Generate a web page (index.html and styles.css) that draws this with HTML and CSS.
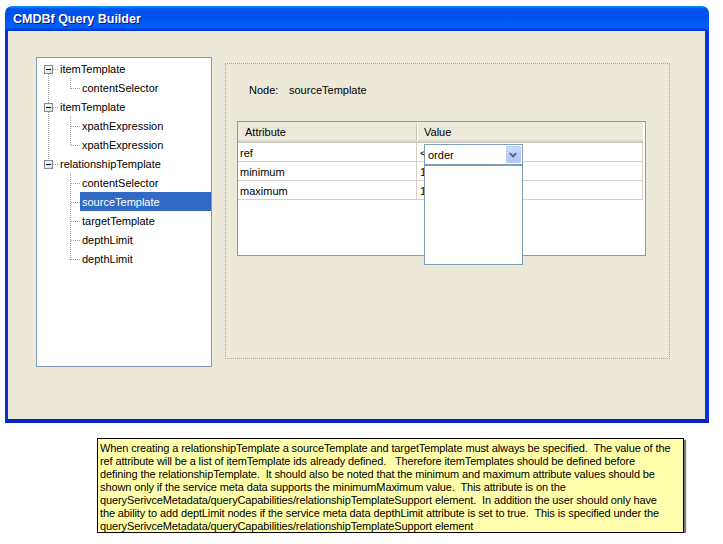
FILE: index.html
```html
<!DOCTYPE html>
<html>
<head>
<meta charset="utf-8">
<title>CMDBf Query Builder</title>
<link rel="stylesheet" href="styles.css">
</head>
<body>
<div class="window">
  <div class="titlebar"><span class="title">CMDBf Query Builder</span></div>
  <div class="frame">
    <div class="client">
      <div class="tree">
        <svg class="tree-lines" width="174" height="308" viewBox="0 0 174 308">
          <g fill="none" stroke="#a0a0a0" stroke-width="1" stroke-dasharray="1 1" shape-rendering="crispEdges">
            <line x1="11.5" y1="16" x2="11.5" y2="45"/>
            <line x1="11.5" y1="54" x2="11.5" y2="102"/>
            <line x1="16" y1="11.5" x2="22" y2="11.5"/>
            <line x1="16" y1="49.5" x2="22" y2="49.5"/>
            <line x1="16" y1="106.5" x2="22" y2="106.5"/>
            <line x1="33.5" y1="20" x2="33.5" y2="31"/>
            <line x1="33.5" y1="58" x2="33.5" y2="88"/>
            <line x1="33.5" y1="115" x2="33.5" y2="202"/>
            <line x1="34" y1="30.5" x2="43" y2="30.5"/>
            <line x1="34" y1="68.5" x2="43" y2="68.5"/>
            <line x1="34" y1="87.5" x2="43" y2="87.5"/>
            <line x1="34" y1="125.5" x2="43" y2="125.5"/>
            <line x1="34" y1="144.5" x2="43" y2="144.5"/>
            <line x1="34" y1="163.5" x2="43" y2="163.5"/>
            <line x1="34" y1="182.5" x2="43" y2="182.5"/>
            <line x1="34" y1="201.5" x2="43" y2="201.5"/>
          </g>
        </svg>
        <div class="row root"><span class="exp"></span><span class="label">itemTemplate</span></div>
        <div class="row child"><span class="label">contentSelector</span></div>
        <div class="row root"><span class="exp"></span><span class="label">itemTemplate</span></div>
        <div class="row child"><span class="label">xpathExpression</span></div>
        <div class="row child"><span class="label">xpathExpression</span></div>
        <div class="row root"><span class="exp"></span><span class="label">relationshipTemplate</span></div>
        <div class="row child"><span class="label">contentSelector</span></div>
        <div class="row child"><span class="label selected">sourceTemplate</span></div>
        <div class="row child"><span class="label">targetTemplate</span></div>
        <div class="row child"><span class="label">depthLimit</span></div>
        <div class="row child"><span class="label">depthLimit</span></div>
      </div>
      <div class="panel">
        <div class="node"><span class="node-key">Node:</span><span class="node-val">sourceTemplate</span></div>
        <div class="table">
          <div class="thead">
            <div class="th c1">Attribute</div>
            <div class="th c2">Value</div>
          </div>
          <div class="tr"><div class="td c1">ref</div><div class="td c2">&lt;</div></div>
          <div class="tr"><div class="td c1">minimum</div><div class="td c2">1</div></div>
          <div class="tr"><div class="td c1">maximum</div><div class="td c2">1</div></div>
          <div class="combo">
            <div class="combo-field">
              <span class="combo-text">order</span>
              <span class="combo-btn">
                <svg width="15" height="17" viewBox="0 0 15 17"><polyline points="4,7 7.5,10.5 11,7" fill="none" stroke="#4d6185" stroke-width="2"/></svg>
              </span>
            </div>
            <div class="combo-list"></div>
          </div>
        </div>
      </div>
    </div>
  </div>
</div>
<div class="note">
<div class="line">When creating a relationshipTemplate a sourceTemplate and targetTemplate must always be specified.  The value of the</div>
<div class="line">ref attribute will be a list of itemTemplate ids already defined.   Therefore itemTemplates should be defined before</div>
<div class="line">defining the relationshipTemplate.  It should also be noted that the minimum and maximum attribute values should be</div>
<div class="line">shown only if the service meta data supports the minimumMaximum value.  This attribute is on the</div>
<div class="line">querySerivceMetadata/queryCapabilities/relationshipTemplateSupport element.  In addition the user should only have</div>
<div class="line">the ability to add deptLimit nodes if the service meta data depthLimit attribute is set to true.  This is specified under the</div>
<div class="line">querySerivceMetadata/queryCapabilities/relationshipTemplateSupport element</div>
</div>
</body>
</html>
```

FILE: styles.css
```css
html, body {
  margin: 0;
  padding: 0;
  background: #ffffff;
}
body {
  font-family: "Liberation Sans", Arial, sans-serif;
  font-size: 11px;
  color: #000;
}

.window {
  margin: 6px 0 0 5px;
  width: 704px;
  border-radius: 7px 7px 0 0;
  overflow: hidden;
}

.titlebar {
  height: 25px;
  padding-left: 8px;
  display: flex;
  align-items: center;
  background: linear-gradient(to bottom, #0997ff 0%, #0053ee 12%, #0050ee 40%, #0060f8 80%, #005bff 88%, #003dd7 94%, #003dd7 100%);
}
.title {
  font-family: "Liberation Sans", Arial, sans-serif;
  font-weight: bold;
  font-size: 12.5px;
  color: #fff;
  text-shadow: 1px 1px 0 #0f1089;
}

.frame {
  border-style: solid;
  border-color: #0831d9;
  border-width: 0 4px 4px 3px;
  border-bottom-color: #0722c5;
}

.client {
  background: #ece9d8;
  height: 388px;
  box-sizing: border-box;
  padding: 26px 0 0 28px;
  display: flex;
  align-items: flex-start;
}

/* Tree */
.tree {
  position: relative;
  width: 176px;
  height: 310px;
  box-sizing: border-box;
  border: 1px solid #7f9db9;
  background: #fff;
  padding-top: 1px;
}
.tree-lines {
  position: absolute;
  left: 0;
  top: 0;
}
.row {
  position: relative;
  height: 19px;
  display: flex;
  align-items: center;
  white-space: nowrap;
}
.row.root {
  padding-left: 7px;
}
.exp {
  width: 9px;
  height: 9px;
  box-sizing: border-box;
  border: 1px solid #7c8c9c;
  background: linear-gradient(135deg, #ffffff 0%, #f0efe8 60%, #d8d6cc 100%);
  margin-top: 1px;
  position: relative;
}
.exp::after {
  content: "";
  position: absolute;
  left: 1px;
  top: 3px;
  width: 5px;
  height: 1px;
  background: #000;
}
.label {
  line-height: 20px;
  height: 19px;
}
.row.root .label {
  margin-left: 7px;
}
.row.child .label {
  margin-left: 43px;
  padding: 0 2px;
  flex: 1;
}
.label.selected {
  background: #316ac5;
  color: #fff;
}

/* Right panel */
.panel {
  margin: 6px 0 0 13px;
  width: 445px;
  height: 296px;
  box-sizing: border-box;
  border: 1px dotted #a8a694;
}
.node {
  display: flex;
  margin: 20px 0 0 23px;
  line-height: 13px;
}
.node-key {
  width: 40px;
}

.table {
  position: relative;
  margin: 24px 0 0 11px;
  width: 409px;
  height: 135px;
  box-sizing: border-box;
  border: 1px solid #7f9db9;
  background: #fff;
}
.thead {
  display: flex;
  width: 405px;
  height: 21px;
  background: linear-gradient(to bottom, #ebeadb 0, #ebeadb 18px, #e2e2da 18px, #e2e2da 19px, #d6d2c2 19px, #d6d2c2 20px, #cbc7b8 20px, #cbc7b8 21px);
}
.th {
  line-height: 21px;
  box-sizing: border-box;
  padding-left: 7px;
}
.th.c1 {
  width: 179px;
  position: relative;
}
.th.c1::after {
  content: "";
  position: absolute;
  right: 0;
  top: 2px;
  width: 1px;
  height: 16px;
  background: #c7c5b2;
  box-shadow: 1px 0 0 #ffffff;
}
.th.c2 {
  flex: 1;
}
.tr {
  display: flex;
  width: 405px;
  height: 19px;
  box-sizing: border-box;
  border-bottom: 1px solid #d4d0c8;
  border-right: 1px solid #d4d0c8;
}
.td {
  line-height: 20px;
  white-space: nowrap;
  overflow: hidden;
}
.td.c1 {
  width: 179px;
  box-sizing: border-box;
  border-right: 1px solid #d4d0c8;
  padding-left: 2px;
}
.td.c2 {
  flex: 1;
  padding-left: 3px;
}

/* Combo popup */
.combo {
  position: absolute;
  left: 186px;
  top: 22px;
  width: 99px;
  height: 121px;
  box-sizing: border-box;
  border: 1px solid #7f9db9;
  background: #fff;
  display: flex;
  flex-direction: column;
}
.combo-field {
  display: flex;
  height: 21px;
  box-sizing: border-box;
  border-bottom: 2px solid #7f9db9;
}
.combo-text {
  padding-left: 3px;
  line-height: 20px;
}
.combo-btn {
  margin: 1px 1px 0 auto;
  width: 15px;
  height: 17px;
  box-sizing: border-box;
  border: 1px solid #b9c9ef;
  border-radius: 1px;
  background: linear-gradient(to bottom, #d2defb 0%, #bccefa 50%, #b0c4f5 100%);
  display: flex;
}
.combo-btn svg {
  margin: -1px 0 0 -1px;
}
.combo-list {
  flex: 1;
}

/* Note */
.note {
  margin: 15px 0 0 97px;
  width: 587px;
  height: 95px;
  box-sizing: border-box;
  border: 1px solid #000;
  background: #ffffac;
  box-shadow: 2px 2px 1px #7a7a7a;
  padding: 3px 0 0 2px;
  line-height: 13px;
  letter-spacing: -0.12px;
}
.line {
  white-space: pre;
}
```
